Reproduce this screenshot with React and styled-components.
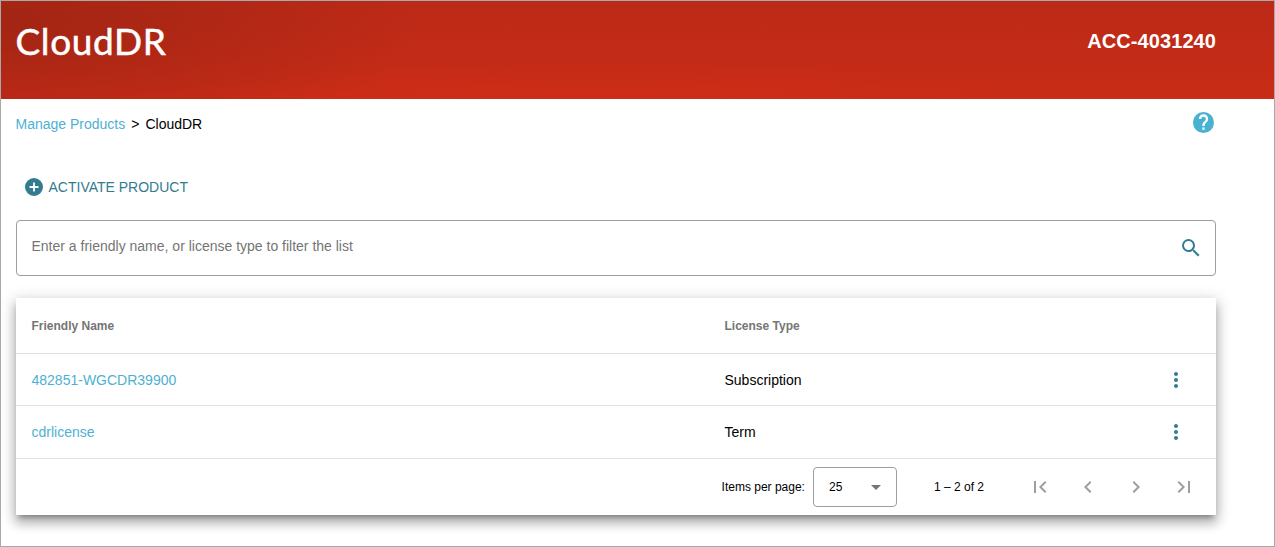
import styled, { createGlobalStyle } from 'styled-components';

const GlobalStyle = createGlobalStyle`
  html, body {
    margin: 0;
    padding: 0;
    background: #fff;
  }
  * {
    box-sizing: border-box;
  }
  body {
    font-family: "Liberation Sans", Arial, sans-serif;
  }
`;

const Page = styled.div`
  width: 1275px;
  height: 547px;
  border: 1px solid #a9a9a9;
  overflow: hidden;
  background: #fff;
`;

const Banner = styled.header`
  height: 98px;
  padding: 0 58px 18px 14.5px;
  display: flex;
  align-items: center;
  justify-content: space-between;
  color: #fff;
  background:
    radial-gradient(ellipse 420px 40px at 600px 100px, rgba(210, 46, 23, 0.6), rgba(210, 46, 23, 0)),
    radial-gradient(ellipse 420px 130px at 0px 20px, rgba(160, 36, 19, 0.9), rgba(160, 36, 19, 0)),
    linear-gradient(180deg, #bc2a17 0%, #c22b17 55%, #c92c17 100%);
`;

const Title = styled.h1`
  margin: 0;
  font-family: Lato, "Open Sans", sans-serif;
  font-size: 37px;
  font-weight: 400;
  line-height: 48px;
  letter-spacing: 0.6px;
  -webkit-text-stroke: 0.5px #fff;
`;

const Account = styled.div`
  font-size: 20px;
  font-weight: 700;
  letter-spacing: 0.08px;
`;

const Content = styled.main`
  padding: 0 58px 0 14.5px;
`;

const CrumbRow = styled.div`
  height: 50px;
  display: flex;
  align-items: center;
  justify-content: space-between;
  font-size: 14px;
`;

const Crumbs = styled.nav`
  display: flex;
  gap: 6px;
  color: #000;
`;

const TextLink = styled.a`
  color: #4eb1d1;
  text-decoration: none;
`;

const HelpButton = styled.span`
  display: flex;
  margin: -4px 2.5px 0 0;
  color: #49b2d3;
`;

const ActivateButton = styled.button`
  display: flex;
  align-items: center;
  gap: 5.5px;
  height: 38px;
  margin: 19px 0 14px;
  padding: 0 0 0 9.5px;
  border: 0;
  background: none;
  color: #337b8f;
  font: 14px "Liberation Sans", Arial, sans-serif;
`;

const SearchBox = styled.div`
  height: 56px;
  margin-left: 0.5px;
  padding: 0 15px 0 14.5px;
  display: flex;
  align-items: center;
  justify-content: space-between;
  border: 1px solid #9e9e9e;
  border-radius: 4px;
`;

const Placeholder = styled.span`
  margin-top: -4px;
  font-size: 14px;
  color: #757575;
`;

const SearchIcon = styled.svg`
  width: 24px;
  height: 24px;
  margin-right: -3px;
  fill: #337b8f;
`;

const Card = styled.section`
  margin: 22px 0 0 0.5px;
  height: 217px;
  background: #fff;
  box-shadow: 0 5px 5px -3px rgba(0, 0, 0, 0.3), 0 8px 10px 1px rgba(0, 0, 0, 0.2), 0 3px 14px 2px rgba(0, 0, 0, 0.16);
`;

const Row = styled.div`
  display: grid;
  grid-template-columns: 693px 1fr 48px;
  align-items: center;
  height: ${(p) => p.$height}px;
  padding: 0 16px 0 15.5px;
  border-bottom: 1px solid #e0e0e0;
  font-size: 14px;
  color: #000;
`;

const HeadCell = styled.div`
  font-size: 12px;
  font-weight: 700;
  color: #757575;
`;

const MenuButton = styled.svg`
  width: 24px;
  height: 24px;
  justify-self: center;
  fill: #337b8f;
`;

const Paginator = styled.footer`
  height: 56px;
  padding: 0 20px 0 0;
  display: flex;
  align-items: center;
  justify-content: flex-end;
  font-size: 12px;
  color: #000;
`;

const PageSize = styled.div`
  width: 84px;
  height: 40px;
  margin-left: 8px;
  padding: 0 15px 0 15px;
  display: flex;
  align-items: center;
  justify-content: space-between;
  border: 1px solid #9e9e9e;
  border-radius: 4px;
`;

const Caret = styled.span`
  width: 0;
  height: 0;
  border-left: 5px solid transparent;
  border-right: 5px solid transparent;
  border-top: 5px solid #757575;
`;

const RangeLabel = styled.span`
  margin-left: 37px;
  margin-right: 44px;
`;

const PagerButton = styled.svg`
  width: 24px;
  height: 24px;
  margin-left: ${(p) => (p.$first ? 0 : 24)}px;
  fill: #9e9e9e;
`;

const icons = {
  first: 'M18.41 16.59 13.82 12l4.59-4.59L17 6l-6 6 6 6zM6 6h2v12H6z',
  prev: 'M15.41 7.41 14 6l-6 6 6 6 1.41-1.41L10.83 12z',
  next: 'M10 6 8.59 7.41 13.17 12l-4.58 4.59L10 18l6-6z',
  last: 'M5.59 7.41 10.18 12l-4.59 4.59L7 18l6-6-6-6zM16 6h2v12h-2z',
};

const rows = [
  { name: '482851-WGCDR39900', type: 'Subscription', height: 52 },
  { name: 'cdrlicense', type: 'Term', height: 53 },
];

export default function App() {
  return (
    <Page>
      <GlobalStyle />
      <Banner>
        <Title>CloudDR</Title>
        <Account>ACC-4031240</Account>
      </Banner>
      <Content>
        <CrumbRow>
          <Crumbs>
            <TextLink href="#">Manage Products</TextLink>
            <span>&gt;</span>
            <span>CloudDR</span>
          </Crumbs>
          <HelpButton>
            <svg width="21" height="21" viewBox="3 3 18 18" fill="currentColor">
              <path d="M12 3a9 9 0 1 0 0 18 9 9 0 0 0 0-18zm1 15.2h-2v-2h2v2zm2.07-6.95-.9.92C13.45 12.9 13 13.5 13 15h-2v-.5c0-1.1.45-2.1 1.17-2.83l1.24-1.26c.37-.36.59-.86.59-1.41 0-1.1-.9-2-2-2s-2 .9-2 2H8c0-2.21 1.79-4 4-4s4 1.79 4 4c0 .88-.36 1.68-.93 2.25z" />
            </svg>
          </HelpButton>
        </CrumbRow>

        <ActivateButton>
          <svg width="18" height="18" viewBox="2 2 20 20" fill="currentColor">
            <path d="M12 2a10 10 0 1 0 0 20 10 10 0 0 0 0-20zm5 11h-4v4h-2v-4H7v-2h4V7h2v4h4v2z" />
          </svg>
          ACTIVATE PRODUCT
        </ActivateButton>

        <SearchBox>
          <Placeholder>Enter a friendly name, or license type to filter the list</Placeholder>
          <SearchIcon viewBox="0 0 24 24">
            <path d="M15.5 14h-.79l-.28-.27A6.47 6.47 0 0 0 16 9.5 6.5 6.5 0 1 0 9.5 16c1.61 0 3.09-.59 4.23-1.57l.27.28v.79l5 4.99L20.49 19l-4.99-5zm-6 0C7.01 14 5 11.99 5 9.5S7.01 5 9.5 5 14 7.01 14 9.5 11.99 14 9.5 14z" />
          </SearchIcon>
        </SearchBox>

        <Card>
          <Row $height={56}>
            <HeadCell>Friendly Name</HeadCell>
            <HeadCell>License Type</HeadCell>
          </Row>
          {rows.map((row) => (
            <Row key={row.name} $height={row.height}>
              <TextLink href="#">{row.name}</TextLink>
              <span>{row.type}</span>
              <MenuButton viewBox="0 0 24 24">
                <path d="M12 8c1.1 0 2-.9 2-2s-.9-2-2-2-2 .9-2 2 .9 2 2 2zm0 2c-1.1 0-2 .9-2 2s.9 2 2 2 2-.9 2-2-.9-2-2-2zm0 6c-1.1 0-2 .9-2 2s.9 2 2 2 2-.9 2-2-.9-2-2-2z" />
              </MenuButton>
            </Row>
          ))}
          <Paginator>
            <span>Items per page:</span>
            <PageSize>
              <span>25</span>
              <Caret />
            </PageSize>
            <RangeLabel>1 – 2 of 2</RangeLabel>
            <PagerButton $first viewBox="0 0 24 24"><path d={icons.first} /></PagerButton>
            <PagerButton viewBox="0 0 24 24"><path d={icons.prev} /></PagerButton>
            <PagerButton viewBox="0 0 24 24"><path d={icons.next} /></PagerButton>
            <PagerButton viewBox="0 0 24 24"><path d={icons.last} /></PagerButton>
          </Paginator>
        </Card>
      </Content>
    </Page>
  );
}
